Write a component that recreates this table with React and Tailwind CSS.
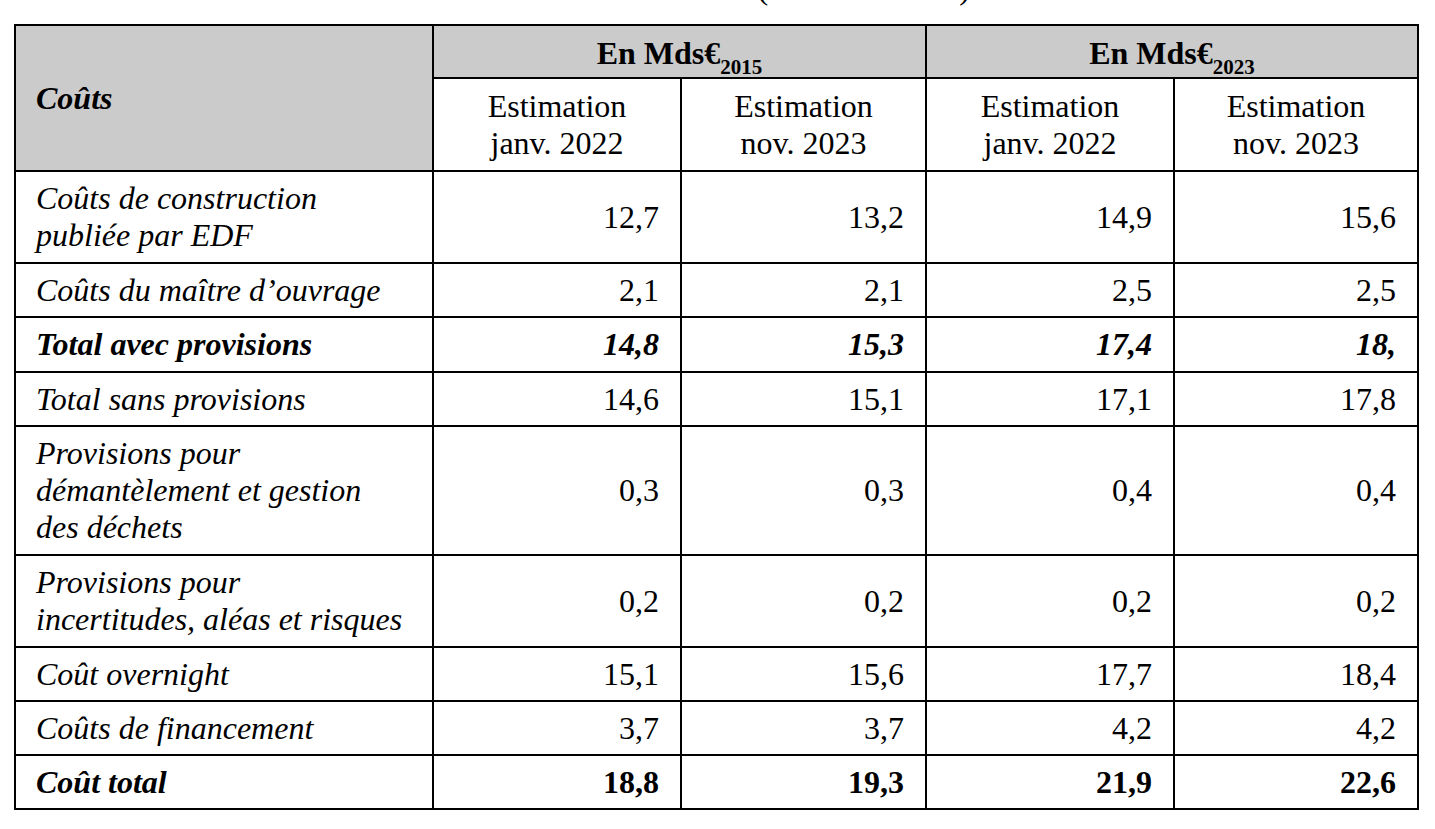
const rows = [
  { label: ["Coûts de construction", "publiée par EDF"], values: ["12,7", "13,2", "14,9", "15,6"], h: "h-[92px]" },
  { label: ["Coûts du maître d’ouvrage"], values: ["2,1", "2,1", "2,5", "2,5"], h: "h-[54px]" },
  { label: ["Total avec provisions"], values: ["14,8", "15,3", "17,4", "18,"], h: "h-[55px]", strong: "both" },
  { label: ["Total sans provisions"], values: ["14,6", "15,1", "17,1", "17,8"], h: "h-[54px]" },
  { label: ["Provisions pour", "démantèlement et gestion", "des déchets"], values: ["0,3", "0,3", "0,4", "0,4"], h: "h-[129px]" },
  { label: ["Provisions pour", "incertitudes, aléas et risques"], values: ["0,2", "0,2", "0,2", "0,2"], h: "h-[92px]" },
  { label: ["Coût overnight"], values: ["15,1", "15,6", "17,7", "18,4"], h: "h-[54px]" },
  { label: ["Coûts de financement"], values: ["3,7", "3,7", "4,2", "4,2"], h: "h-[54px]" },
  { label: ["Coût total"], values: ["18,8", "19,3", "21,9", "22,6"], h: "h-[54px]", strong: "bold" },
];

function Estimation({ month }) {
  return (
    <>
      Estimation
      <br />
      {month}
    </>
  );
}

export default function App() {
  return (
    <div className="min-h-screen bg-white text-black font-[family-name:'Liberation_Serif','Times_New_Roman',serif] text-[32px] leading-[37px]">
      {/* title of the page above, mostly scrolled out of view */}
      <div className="h-6 overflow-hidden">
        <p className="-mt-[30px] text-center pr-[40px]">
          Tableau 3 : coût de l'EPR (en Mds€ 2023 )
        </p>
      </div>
      <table className="ml-[14px] w-[1403px] table-fixed border-collapse">
        <colgroup>
          <col className="w-[418px]" />
          <col className="w-[248px]" />
          <col className="w-[245px]" />
          <col className="w-[248px]" />
          <col className="w-[244px]" />
        </colgroup>
        <thead>
          <tr className="h-[53px]">
            <th
              rowSpan={2}
              className="border-2 border-black bg-[#cbcbcb] pl-5 text-left align-middle font-bold italic"
            >
              Coûts
            </th>
            <th colSpan={2} className="border-2 border-black bg-[#cbcbcb] pt-1 text-center font-bold">
              En Mds€<sub className="text-[21px] align-[-5px]">2015</sub>
            </th>
            <th colSpan={2} className="border-2 border-black bg-[#cbcbcb] pt-1 text-center font-bold">
              En Mds€<sub className="text-[21px] align-[-5px]">2023</sub>
            </th>
          </tr>
          <tr className="h-[93px]">
            <th className="border-2 border-black text-center font-normal">
              <Estimation month="janv. 2022" />
            </th>
            <th className="border-2 border-black text-center font-normal">
              <Estimation month="nov. 2023" />
            </th>
            <th className="border-2 border-black text-center font-normal">
              <Estimation month="janv. 2022" />
            </th>
            <th className="border-2 border-black text-center font-normal">
              <Estimation month="nov. 2023" />
            </th>
          </tr>
        </thead>
        <tbody>
          {rows.map((row) => (
            <tr key={row.label.join(" ")} className={row.h}>
              <td
                className={
                  "border-2 border-black pl-5 align-middle italic " +
                  (row.strong ? "font-bold" : "")
                }
              >
                {row.label.map((line, i) => (
                  <span key={i} className="block">
                    {line}
                  </span>
                ))}
              </td>
              {row.values.map((v, i) => (
                <td
                  key={i}
                  className={
                    "border-2 border-black pr-[21px] text-right align-middle " +
                    (row.strong === "both" ? "font-bold italic" : row.strong === "bold" ? "font-bold" : "")
                  }
                >
                  {v}
                </td>
              ))}
            </tr>
          ))}
        </tbody>
      </table>
    </div>
  );
}
